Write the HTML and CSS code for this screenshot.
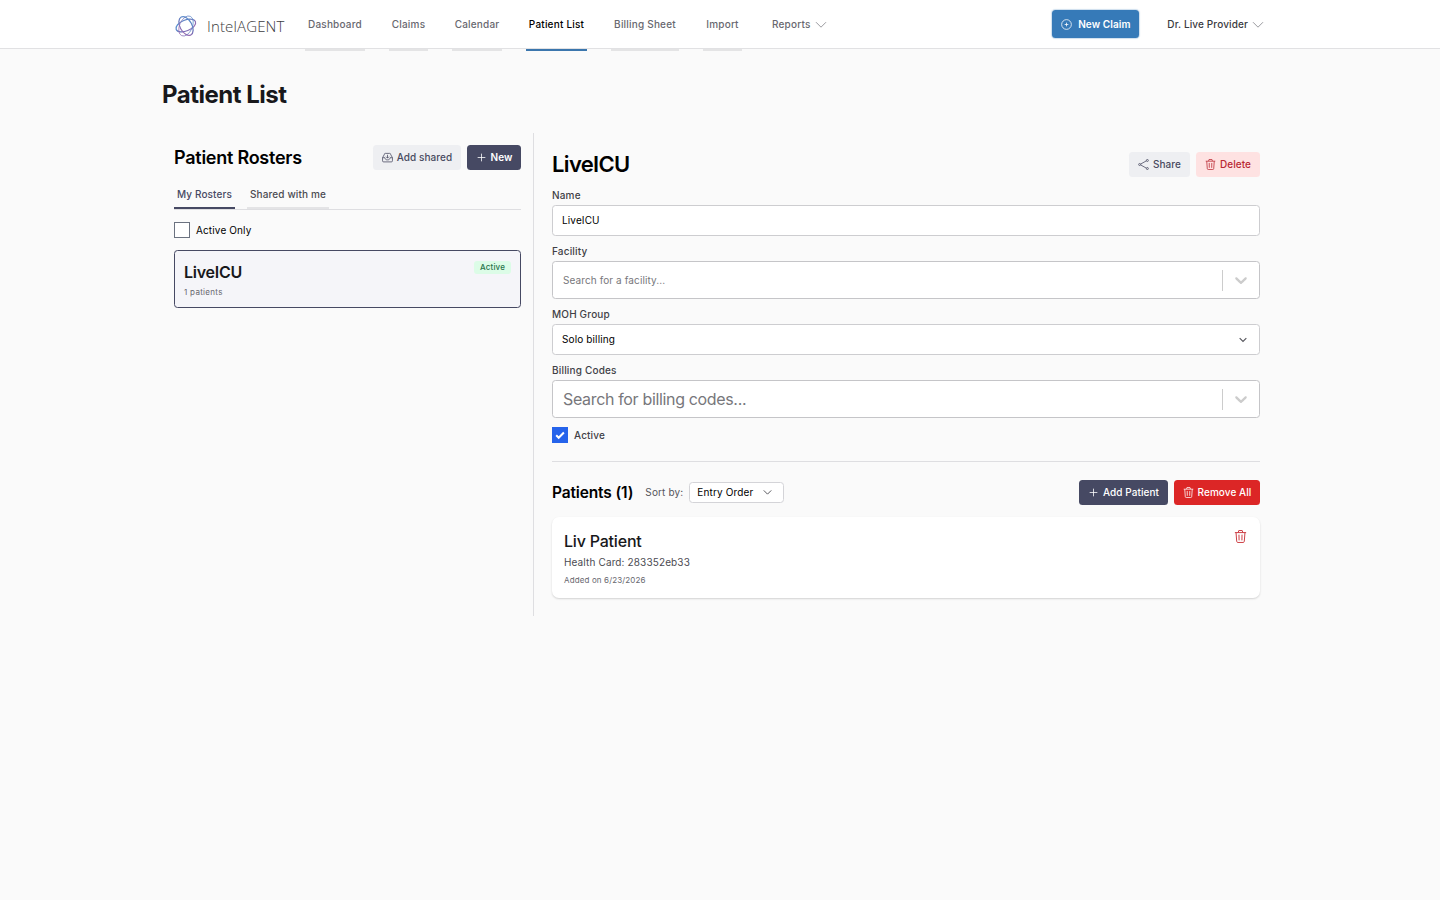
FILE: index.html
```html
<!DOCTYPE html>
<html lang="en">
<head>
  <meta charset="UTF-8">
  <meta name="viewport" content="width=device-width, initial-scale=1.0">
  <title>Patient List - IntelAGENT</title>
  <link rel="stylesheet" href="styles.css">
</head>
<body>
  <!-- Shared icon shapes -->
  <svg class="sprite" aria-hidden="true">
    <symbol id="chevron" viewBox="0 0 12 12"><path d="M1 3.2l5 5 5-5"/></symbol>
    <symbol id="plus" viewBox="0 0 12 12"><path d="M6 1.8v8.4M1.8 6h8.4"/></symbol>
    <symbol id="trash" viewBox="0 0 12 12"><path d="M.8 2.4h10.4M3.9 2.3l.5-1.8h3.2l.5 1.8M1.9 2.5l.6 8c.1.6.4 1 1 1h5c.6 0 .9-.4 1-1l.6-8M4.6 4.3l.1 5.3M7.4 4.3l-.1 5.3"/></symbol>
    <symbol id="share" viewBox="0 0 12 12"><path d="M2.9 5.5l6.3-3.5M2.9 6.5l6.3 3.5"/><circle cx="1.8" cy="6" r="1.1"/><circle cx="10.2" cy="1.6" r="1.1"/><circle cx="10.2" cy="10.4" r="1.1"/></symbol>
    <symbol id="inbox" viewBox="0 0 12 12"><path d="M.6 6.2v3.4c0 .8.4 1.2 1.2 1.2h8.4c.8 0 1.2-.4 1.2-1.2V6.2L9.6 3M.6 6.2L2.4 3M.6 6.2h2.6c.3 2 1.2 2.400 2.800 2.400s2.500-.4 2.800-2.400h2.600M2.400 3c0-1 .5-1.500 1.200-1.500h4.800c.7 0 1.200.5 1.200 1.500M6 3v3.600M4.400 5.100L6 6.700l1.600-1.600"/></symbol>
    <symbol id="indicator" viewBox="0 0 20 20"><path d="M4.516 7.548c.436-.446 1.043-.481 1.576 0L10 11.295l3.908-3.747c.533-.481 1.141-.446 1.574 0 .436.445.408 1.197 0 1.615-.406.418-4.695 4.502-4.695 4.502a1.095 1.095 0 0 1-1.576 0S4.924 9.581 4.516 9.163c-.409-.418-.436-1.17 0-1.615z"/></symbol>
  </svg>

  <header class="topbar">
    <div class="topbar-inner">
      <a class="brand" href="#">
        <svg class="brand-mark" viewBox="0 0 24 24">
          <defs>
            <linearGradient id="orbit" gradientUnits="userSpaceOnUse" x1="4" y1="2" x2="16" y2="22">
              <stop offset="0" stop-color="#55a5dc"/>
              <stop offset=".55" stop-color="#6571b8"/>
              <stop offset="1" stop-color="#b46bb0"/>
            </linearGradient>
          </defs>
          <ellipse class="bold" cx="12" cy="11.5" rx="10.4" ry="5.4" transform="rotate(-22 12 12)"/>
          <ellipse class="bold" cx="12" cy="12" rx="10.2" ry="6" transform="rotate(62 12 12)"/>
          <ellipse cx="12" cy="12" rx="10.6" ry="6.4" transform="rotate(114 12 12)"/>
        </svg>
        <span class="brand-name">IntelAGENT</span>
      </a>
      <nav class="nav">
        <a class="nav-item w60" href="#">Dashboard</a>
        <a class="nav-item w39" href="#">Claims</a>
        <a class="nav-item w50" href="#">Calendar</a>
        <a class="nav-item w61 active" href="#">Patient List</a>
        <a class="nav-item w68" href="#">Billing Sheet</a>
        <a class="nav-item w39" href="#">Import</a>
        <a class="nav-menu" href="#">Reports <svg class="icon"><use href="#chevron"/></svg></a>
      </nav>
      <button class="btn btn-claim">
        <svg class="icon" viewBox="0 0 12 12"><circle cx="6" cy="6" r="5.3"/><path d="M6 4v4M4 6h4"/></svg>
        New Claim
      </button>
      <a class="user-menu" href="#">Dr. Live Provider <svg class="icon"><use href="#chevron"/></svg></a>
    </div>
  </header>

  <main class="page">
    <h1>Patient List</h1>
    <div class="panels">
      <!-- Rosters -->
      <section class="rosters">
        <div class="row">
          <h2 class="rosters-title">Patient Rosters</h2>
          <div class="actions">
            <button class="btn btn-light btn-shared"><svg class="icon"><use href="#inbox"/></svg>Add shared</button>
            <button class="btn btn-dark btn-new"><svg class="icon"><use href="#plus"/></svg>New</button>
          </div>
        </div>
        <div class="tabs">
          <a class="tab tab-mine active" href="#">My Rosters</a>
          <a class="tab tab-shared" href="#">Shared with me</a>
        </div>
        <label class="check filter"><span class="box"></span>Active Only</label>
        <article class="roster-card">
          <div>
            <h3>LiveICU</h3>
            <p>1 patients</p>
          </div>
          <span class="badge">Active</span>
        </article>
      </section>

      <!-- Selected roster -->
      <section class="detail">
        <div class="row">
          <h2 class="detail-title">LiveICU</h2>
          <div class="actions">
            <button class="btn btn-light btn-share"><svg class="icon"><use href="#share"/></svg>Share</button>
            <button class="btn btn-delete"><svg class="icon"><use href="#trash"/></svg>Delete</button>
          </div>
        </div>
        <div class="fields">
          <div class="field">
            <div class="label">Name</div>
            <div class="control">LiveICU</div>
          </div>
          <div class="field">
            <div class="label">Facility</div>
            <div class="control combo"><span class="placeholder">Search for a facility...</span><span class="indicator"><svg><use href="#indicator"/></svg></span></div>
          </div>
          <div class="field">
            <div class="label">MOH Group</div>
            <div class="control">Solo billing <svg class="caret"><use href="#chevron"/></svg></div>
          </div>
          <div class="field">
            <div class="label">Billing Codes</div>
            <div class="control combo"><span class="placeholder large">Search for billing codes...</span><span class="indicator"><svg><use href="#indicator"/></svg></span></div>
          </div>
        </div>
        <label class="check status"><span class="box checked"><svg viewBox="0 0 16 16"><path d="M4.2 8.3l2.5 2.5 5.2-5.3"/></svg></span>Active</label>

        <div class="row patients-head">
          <h2 class="patients-title">Patients (1)</h2>
          <span class="sort-label">Sort by:</span>
          <div class="sort">Entry Order <svg class="caret"><use href="#chevron"/></svg></div>
          <div class="actions">
            <button class="btn btn-dark btn-add"><svg class="icon"><use href="#plus"/></svg>Add Patient</button>
            <button class="btn btn-red btn-remove"><svg class="icon"><use href="#trash"/></svg>Remove All</button>
          </div>
        </div>
        <article class="patient-card">
          <div>
            <h3>Liv Patient</h3>
            <p class="health">Health Card: 283352eb33</p>
            <p class="added">Added on 6/23/2026</p>
          </div>
          <svg class="icon"><use href="#trash"/></svg>
        </article>
      </section>
    </div>
  </main>
</body>
</html>
```
FILE: styles.css
```css
* {
  box-sizing: border-box;
}

body {
  margin: 0;
  font-family: Inter, "Liberation Sans", sans-serif;
  font-size: 10px;
  line-height: 14px;
  letter-spacing: 0.13px;
  color: #000;
  background: #fafafa;
}

h1, h2, h3, p {
  margin: 0;
}

a {
  color: inherit;
  text-decoration: none;
}

.sprite {
  display: none;
}

.icon, .caret {
  width: 12px;
  height: 12px;
  flex: none;
  fill: none;
  stroke: currentColor;
  stroke-width: 0.85;
}

/* Top bar */
.topbar {
  height: 49px;
  background: #fff;
  border-bottom: 1px solid #e1e1e3;
}

.topbar-inner {
  display: flex;
  align-items: center;
  width: 1116px;
  height: 48px;
  margin: 0 auto;
  padding: 0 14px 0 12px;
}

.brand {
  display: flex;
  align-items: center;
  gap: 9px;
  width: 131px;
  padding-top: 3px;
}

.brand-mark {
  width: 24px;
  height: 24px;
  fill: none;
  stroke: url(#orbit);
  stroke-width: 0.7;
}

.brand-mark .bold {
  stroke-width: 1.2;
}

.brand-name {
  font-family: "Open Sans", sans-serif;
  font-size: 15px;
  font-weight: 300;
  letter-spacing: 0.15px;
  color: #3c3c40;
}

.nav {
  display: flex;
  gap: 24px;
  height: 51px;
  align-self: flex-start;
  font-weight: 500;
  letter-spacing: 0.2px;
  color: #68686f;
}

.nav-item {
  padding-top: 17px;
  text-align: center;
  white-space: nowrap;
  border-bottom: 2px solid #e4e4e5;
}

.nav-item.active {
  color: #000;
  border-color: #3b76ad;
}

.w39 { width: 39px; }
.w50 { width: 50px; }
.w60 { width: 60px; }
.w61 { width: 61px; }
.w68 { width: 68px; }

.nav-menu {
  display: flex;
  gap: 4px;
  padding: 17px 0 0 6px;
}

.nav-menu .icon, .user-menu .icon {
  margin-top: 2px;
  color: #88888e;
}

.user-menu {
  display: flex;
  gap: 4px;
  margin-left: 28px;
  padding-bottom: 1px;
  font-weight: 500;
  white-space: nowrap;
  color: #3a3a40;
}

/* Buttons */
.btn {
  display: flex;
  align-items: center;
  justify-content: center;
  gap: 4px;
  height: 25px;
  padding: 0 0 1px;
  border: none;
  border-radius: 3.5px;
  font: inherit;
  font-weight: 500;
  letter-spacing: 0.08px;
  white-space: nowrap;
  color: #fff;
}

.btn .icon {
  width: 11px;
  height: 11px;
  margin-top: 1px;
}

.btn-claim {
  width: 87px;
  height: 28px;
  margin-left: auto;
  padding: 0;
  gap: 6px;
  font-weight: 600;
  background: #367ab8;
  box-shadow: 0 0 1px 1px rgba(54, 122, 184, 0.25);
}

.btn-claim .icon {
  margin-top: 0;
}

.btn-light {
  color: #484a60;
  background: #eeeff2;
}

.btn-dark {
  background: #464963;
}

.btn-delete {
  width: 64px;
  color: #b92832;
  background: #fee2e2;
}

.btn-red {
  background: #dc2626;
}

.btn-shared { width: 88px; }
.btn-new { width: 54px; font-weight: 600; }
.btn-share { width: 61px; }
.btn-add { width: 89px; }
.btn-remove { width: 86px; }

/* Page */
.page {
  width: 1116px;
  margin: 0 auto;
}

h1 {
  padding-top: 29px;
  font-size: 24px;
  font-weight: 700;
  line-height: 34px;
  letter-spacing: -0.5px;
  color: #18181b;
}

.panels {
  display: flex;
  height: 483px;
  margin-top: 21px;
}

.row {
  display: flex;
  align-items: center;
  height: 25px;
}

.actions {
  display: flex;
  gap: 6px;
  margin-left: auto;
}

/* Rosters panel */
.rosters {
  width: 372px;
  padding: 12px;
  border-right: 1px solid #dedee1;
}

.rosters-title {
  font-size: 18px;
  font-weight: 600;
  letter-spacing: -0.25px;
}

.tabs {
  display: flex;
  gap: 12px;
  height: 28px;
  margin-top: 12px;
  border-bottom: 1px solid #dedee1;
  font-weight: 500;
  color: #4b4b52;
}

.tab {
  padding-top: 5px;
  text-align: center;
  border-bottom: 2px solid #e4e4e6;
}

.tab.active {
  color: #464963;
  border-color: #464963;
}

.tab-mine { width: 61px; }
.tab-shared { width: 82px; }

.check {
  display: flex;
  align-items: center;
  gap: 6px;
}

.filter {
  margin: 12px 0;
}

.box {
  width: 16px;
  height: 16px;
  background: #fff;
  border: 1px solid #6b7280;
}

.box.checked {
  background: #2563eb;
  border: none;
}

.box svg {
  display: block;
  fill: none;
  stroke: #fff;
  stroke-width: 2;
}

.roster-card {
  display: flex;
  justify-content: space-between;
  align-items: flex-start;
  height: 58px;
  padding: 10px 9px;
  border: 1px solid #464963;
  border-radius: 3.5px;
  background: #f5f5f9;
}

.roster-card h3 {
  font-size: 16px;
  font-weight: 600;
  line-height: 22px;
  letter-spacing: -0.25px;
  color: #18181b;
}

.roster-card p {
  margin-top: 2px;
  font-size: 8px;
  letter-spacing: 0.3px;
  color: #68686f;
}

.badge {
  padding: 0 6px;
  border-radius: 3px;
  font-size: 8px;
  font-weight: 500;
  line-height: 13px;
  color: #28734a;
  background: #dcfce7;
}

/* Detail panel */
.detail {
  width: 744px;
  padding: 19px 18px 18px;
}

.detail-title {
  padding-bottom: 2px;
  font-size: 22px;
  font-weight: 600;
  letter-spacing: -0.65px;
}

.fields {
  display: grid;
  gap: 8px;
  margin-top: 11px;
}

.label {
  margin-bottom: 3px;
  font-weight: 500;
  letter-spacing: 0.18px;
  color: #3f3f46;
}

.control {
  display: flex;
  align-items: center;
  justify-content: space-between;
  height: 31px;
  padding: 0 11px 1px 9px;
  border: 1px solid #cdcdd0;
  border-radius: 3.5px;
  background: #fff;
}

.control .caret {
  width: 8px;
  height: 8px;
  stroke-width: 1.7;
}

.combo {
  height: 38px;
  padding: 0 0 0 10px;
  border-color: #c5c5c8;
}

.placeholder {
  letter-spacing: 0.1px;
  color: #77777b;
}

.placeholder.large {
  font-size: 16px;
  letter-spacing: -0.34px;
}

.indicator {
  display: flex;
  align-items: center;
  justify-content: center;
  width: 37px;
  height: 21px;
  border-left: 1px solid #ccc;
}

.indicator svg {
  width: 20px;
  height: 20px;
  fill: #ccc;
}

.caret {
  width: 9px;
  height: 9px;
  margin: 1px 1px 0 0;
  stroke: #55555c;
  stroke-width: 1.3;
}

.status {
  margin-top: 9px;
  font-weight: 500;
  color: #3f3f46;
}

.patients-head {
  height: 44px;
  margin-top: 18px;
  padding-top: 18px;
  border-top: 1px solid #dedee1;
}

.patients-title {
  font-size: 15.5px;
  font-weight: 600;
  letter-spacing: -0.14px;
}

.sort-label {
  width: 38px;
  margin: 0 6px 0 12px;
  padding-bottom: 1px;
  white-space: nowrap;
  color: #55555c;
}

.sort {
  display: flex;
  align-items: center;
  justify-content: space-between;
  width: 95px;
  height: 21px;
  padding: 0 10px 1px 7px;
  border: 1px solid #d4d4d8;
  border-radius: 3.5px;
  background: #fff;
}

.patient-card {
  display: flex;
  justify-content: space-between;
  height: 81px;
  margin-top: 12px;
  padding: 13px 13px 12px 12px;
  border-radius: 7px;
  background: #fff;
  box-shadow: 0 1px 2px rgba(0, 0, 0, 0.16);
}

.patient-card h3 {
  font-size: 16px;
  font-weight: 500;
  line-height: 22px;
  letter-spacing: -0.2px;
  color: #18181b;
}

.patient-card .health {
  margin-top: 3px;
  color: #4b4b52;
}

.patient-card .added {
  margin-top: 4px;
  font-size: 8px;
  color: #68686f;
}

.patient-card .icon {
  width: 13px;
  height: 13px;
  color: #c92f35;
}
```
